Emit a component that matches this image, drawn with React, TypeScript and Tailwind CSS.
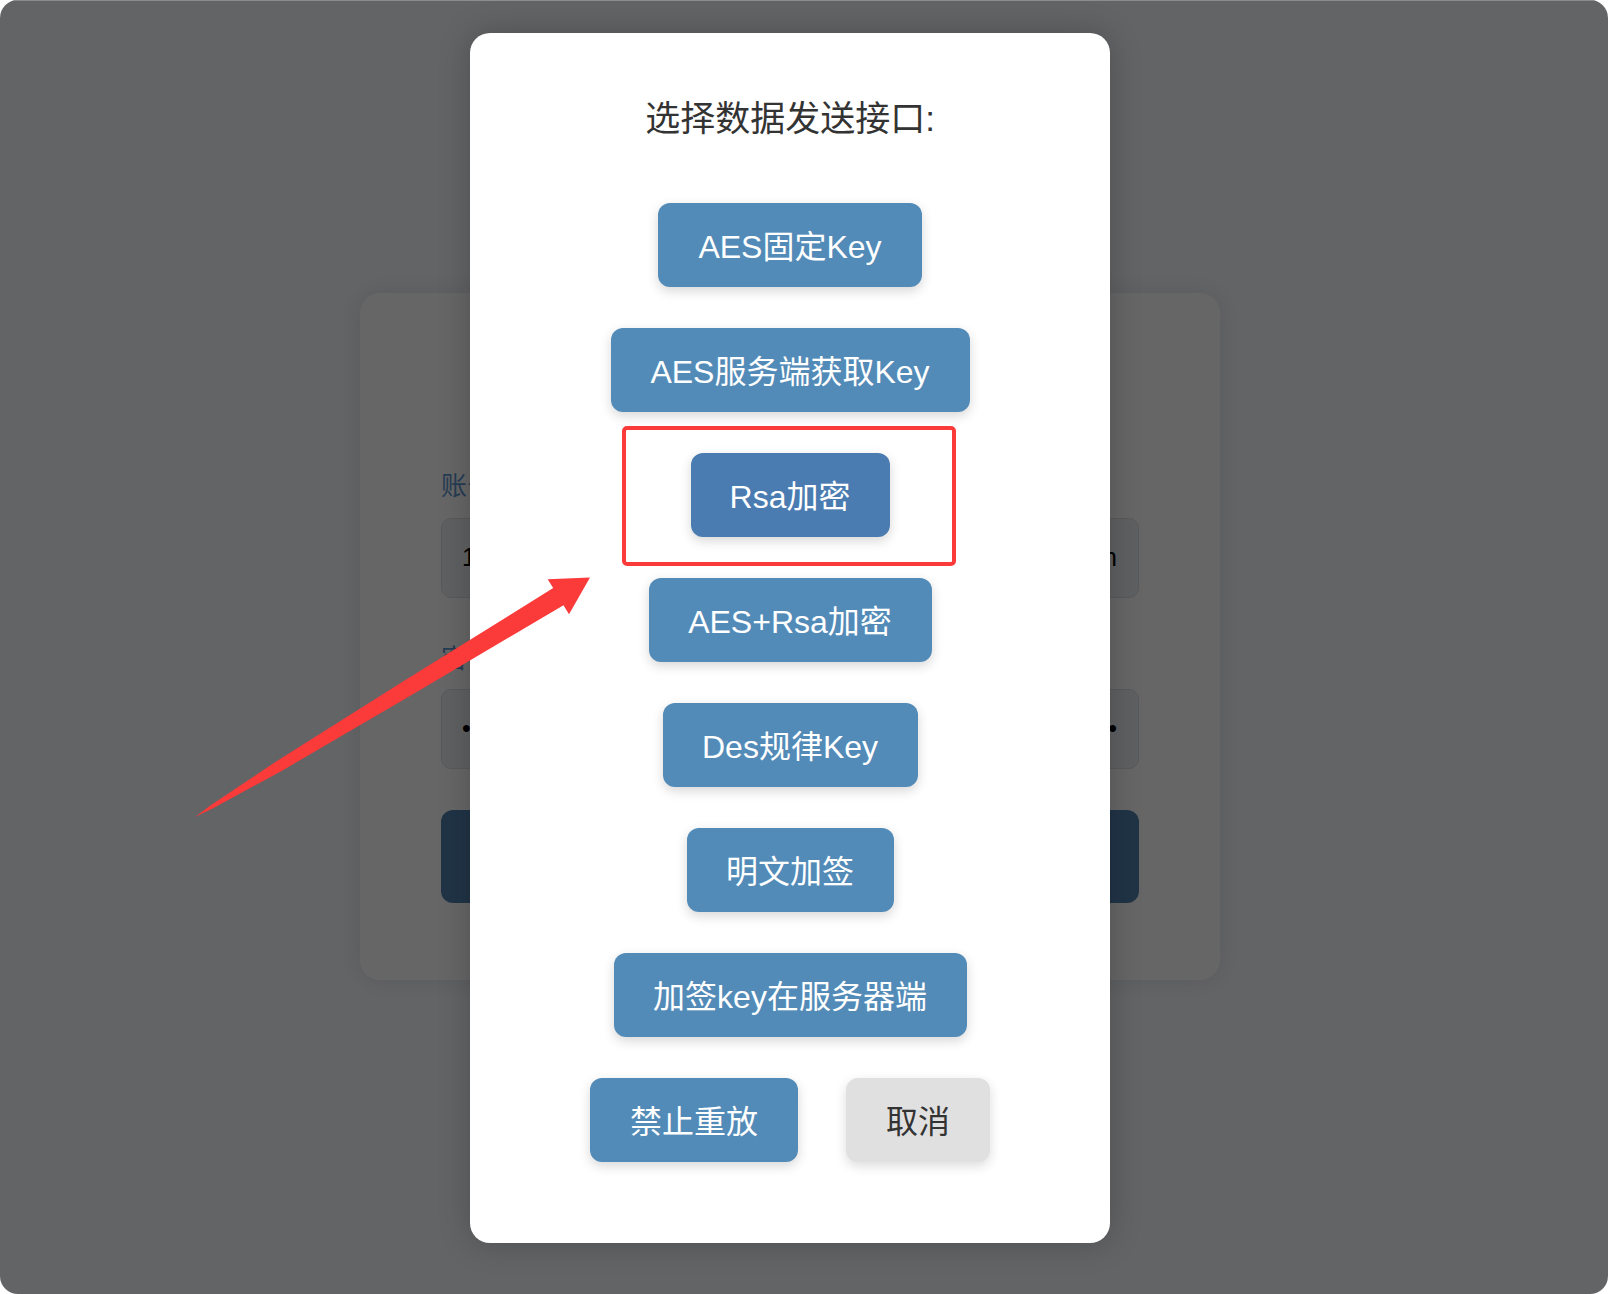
import React from "react";

const FONT = { fontFamily: '"Liberation Sans", "Noto Sans CJK SC", sans-serif' };

// Tapered annotation arrow: thin tail growing into a flat-based head.
function arrowPoints(): string {
  const tail = { x: 195, y: 817 };
  const tip = { x: 590, y: 577.5 };
  const dx = tip.x - tail.x;
  const dy = tip.y - tail.y;
  const len = Math.hypot(dx, dy);
  const u = { x: dx / len, y: dy / len };
  const n = { x: -u.y, y: u.x };
  const headLen = 37;
  const base = len - headLen;
  const profile: [number, number][] = [
    [0, 0],
    [20, 4],
    [100, 11],
    [250, 16],
    [base, 20],
  ];
  const at = (s: number, off: number) => ({
    x: tail.x + u.x * s + n.x * off,
    y: tail.y + u.y * s + n.y * off,
  });
  const top = profile.map(([s, w]) => at(s, -w / 2));
  const bottom = profile.map(([s, w]) => at(s, w / 2)).reverse();
  const head = [at(base, -20.5), tip, at(base, 20.5)];
  return [...top, ...head, ...bottom].map((p) => `${p.x.toFixed(1)},${p.y.toFixed(1)}`).join(" ");
}

function ChoiceButton({ label, width, dark }: { label: string; width: string; dark?: boolean }) {
  return (
    <button
      className={`${width} h-[84px] pt-[3px] rounded-xl ${dark ? "bg-[#4a7cb2]" : "bg-[#538bb8]"} text-white text-[32px] flex items-center justify-center shadow-[0_4px_12px_rgba(0,0,0,0.16)]`}
    >
      {label}
    </button>
  );
}

export default function App() {
  return (
    <div className="w-[1608px] h-[1294px] bg-white" style={FONT}>
      <div className="relative w-full h-full rounded-[18px] overflow-hidden bg-[#f8faff]">
        {/* login page underneath */}
        <div className="pt-[293px] pl-[360px]">
          <div className="w-[860px] h-[687px] bg-white rounded-[20px] shadow-[0_0_24px_rgba(0,0,0,0.1)] pt-[175px] px-[81px] flex flex-col">
            <div className="text-[26px] leading-[36px] text-[#5f97cf]">账号</div>
            <div className="mt-[14px] h-[80px] rounded-[10px] border border-[#dcdfe4] bg-[#eef0f4] flex items-center justify-between pl-[20px] pr-[21px] text-[25px] text-black">
              <span>1</span>
              <span>admin</span>
            </div>
            <div className="mt-[43px] text-[26px] leading-[36px] text-[#5f97cf]">密码</div>
            <div className="mt-[12px] h-[80px] rounded-[10px] border border-[#dcdfe4] bg-[#eef0f4] flex items-center justify-between pl-[20px] pr-[21px] text-[25px] text-black">
              <span>••••••</span>
              <span>••••••</span>
            </div>
            <div className="mt-[41px] h-[93px] rounded-xl bg-[#5082af]" />
          </div>
        </div>

        {/* dimming layer with the dialog */}
        <div className="absolute inset-0 bg-black/60 pl-[470px] pt-[33px]">
          <div className="w-[640px] h-[1210px] bg-white rounded-[20px] shadow-[0_0_32px_rgba(0,0,0,0.22)] flex flex-col items-center pt-[62px]">
            <h2 className="text-[35px] leading-[48px] text-[#333] font-normal">选择数据发送接口:</h2>
            <div className="mt-[60px] flex flex-col items-center gap-[41px]">
              <ChoiceButton label="AES固定Key" width="w-[264px]" />
              <ChoiceButton label="AES服务端获取Key" width="w-[359px]" />
              <ChoiceButton label="Rsa加密" width="w-[199px]" dark />
              <ChoiceButton label="AES+Rsa加密" width="w-[283px]" />
              <ChoiceButton label="Des规律Key" width="w-[255px]" />
              <ChoiceButton label="明文加签" width="w-[207px]" />
              <ChoiceButton label="加签key在服务器端" width="w-[353px]" />
              <div className="flex gap-[48px]">
                <ChoiceButton label="禁止重放" width="w-[208px]" />
                <button className="w-[144px] h-[84px] pt-[3px] rounded-xl bg-[#e0e0e0] text-[#333] text-[32px] flex items-center justify-center shadow-[0_4px_12px_rgba(0,0,0,0.14)]">
                  取消
                </button>
              </div>
            </div>
          </div>
        </div>

        {/* top edge highlight of the window */}
        <div className="absolute top-0 inset-x-0 h-px bg-[#8c8c8c]" />

        {/* red highlight annotations */}
        <div className="absolute left-[622px] top-[426px] w-[334px] h-[140px] border-4 border-[#fb3a3a] rounded-[5px]" />
        <svg className="absolute inset-0" width="1608" height="1294" viewBox="0 0 1608 1294">
          <polygon points={arrowPoints()} fill="#fb3a3a" />
        </svg>
      </div>
    </div>
  );
}
